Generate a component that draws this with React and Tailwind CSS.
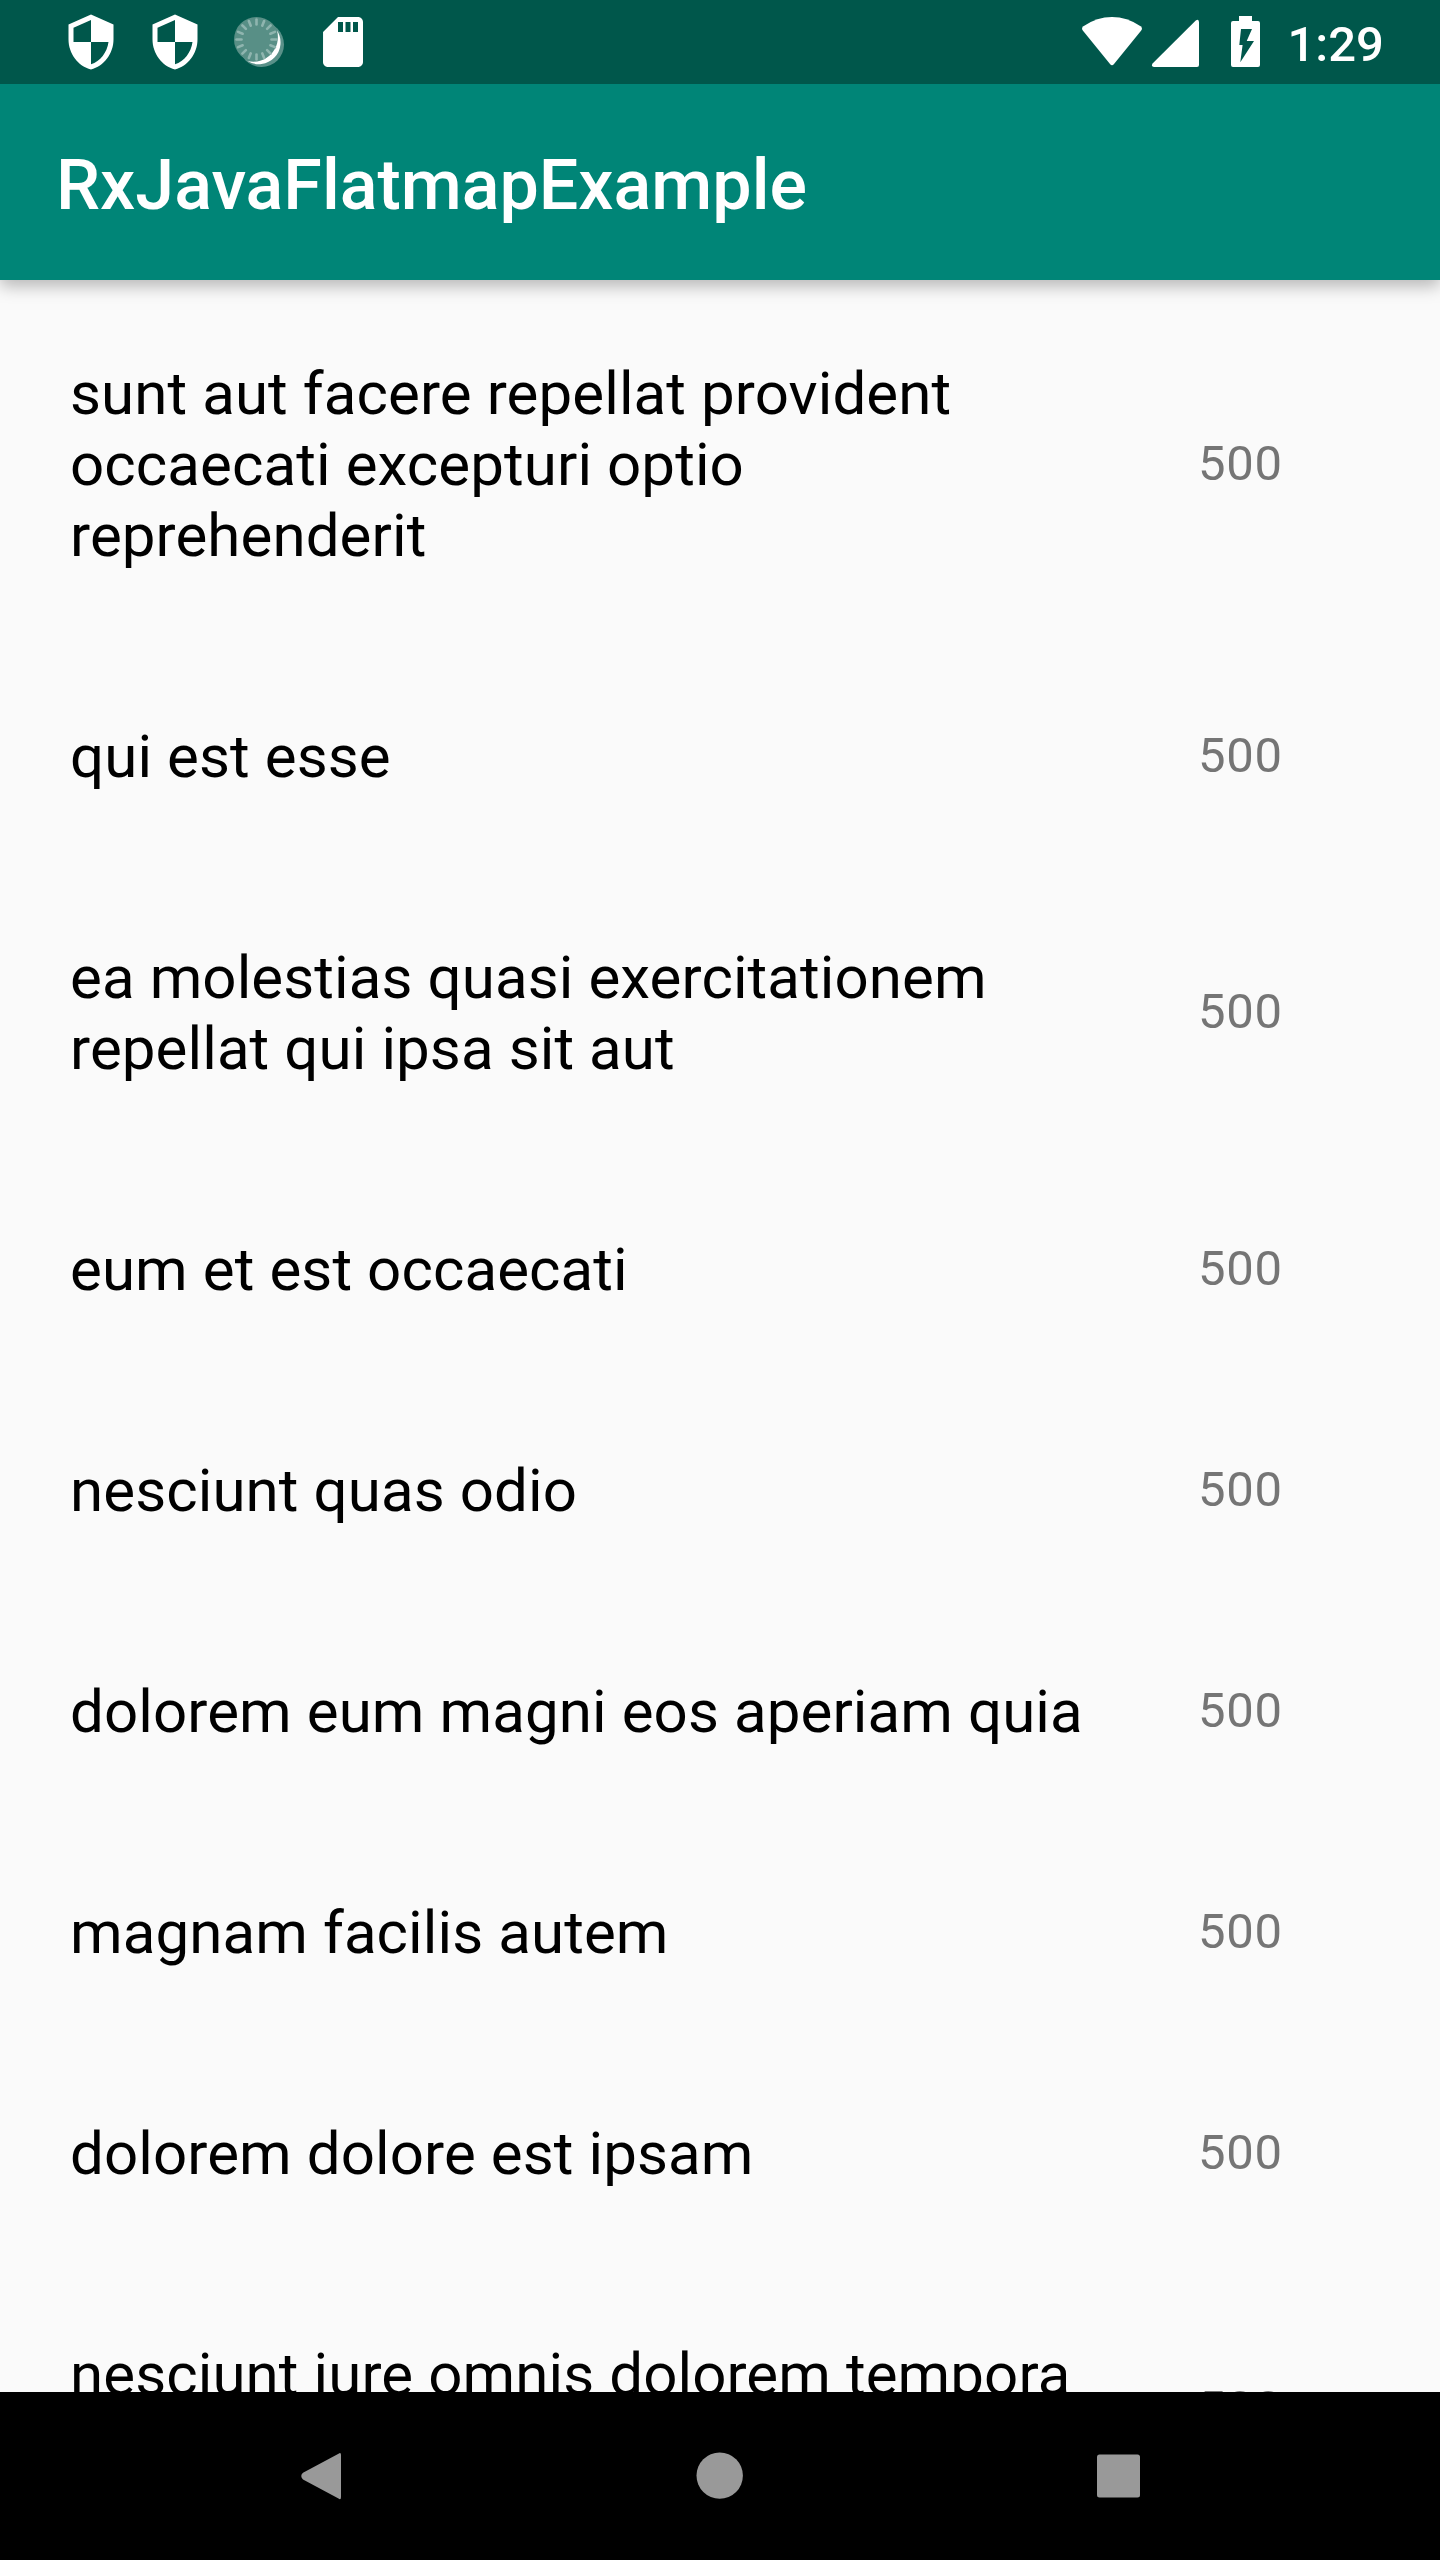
import React from "react";

const posts = [
  ["sunt aut facere repellat provident", "occaecati excepturi optio", "reprehenderit"],
  ["qui est esse"],
  ["ea molestias quasi exercitationem", "repellat qui ipsa sit aut"],
  ["eum et est occaecati"],
  ["nesciunt quas odio"],
  ["dolorem eum magni eos aperiam quia"],
  ["magnam facilis autem"],
  ["dolorem dolore est ipsam"],
  ["nesciunt iure omnis dolorem tempora", "et accusantium"],
];

function ShieldIcon() {
  return (
    <svg className="size-[60px]" viewBox="0 0 24 24" fill="white">
      <path d="M12 1L3 5v6c0 5.55 3.84 10.74 9 12 5.16-1.26 9-6.45 9-12V5l-9-4zm0 10.99h7c-.53 4.12-3.28 7.79-7 8.94V12H5V6.3l7-3.11v8.8z" />
    </svg>
  );
}

function SyncSpinner() {
  return (
    <svg className="size-[60px]" viewBox="229 12 60 60">
      <circle cx="261.5" cy="44.5" r="22.5" fill="white" fillOpacity=".35" />
      <circle cx="256.5" cy="39.5" r="22.5" fill="#588f86" />
      <path d="M277 30.5A21.75 21.75 0 0 1 247.5 61A24.6 24.6 0 0 0 277 30.5Z" fill="white" />
      <g stroke="#8fb5af" strokeWidth="2.6" strokeLinecap="round">
        {Array.from({ length: 16 }, (_, i) => (
          <line key={i} x1="256.5" y1="19.5" x2="256.5" y2="24.5" transform={`rotate(${i * 22.5} 256.5 39.5)`} />
        ))}
      </g>
    </svg>
  );
}

function SdCardIcon() {
  return (
    <svg className="size-[60px]" viewBox="0 0 24 24" fill="white">
      <path d="M18 2h-8L4.02 8 4 20c0 1.1.9 2 2 2h12c1.1 0 2-.9 2-2V4c0-1.1-.9-2-2-2zm-6 6h-2V4h2v4zm3 0h-2V4h2v4zm3 0h-2V4h2v4z" />
    </svg>
  );
}

function SystemIcons() {
  return (
    <svg className="h-[84px] w-[180px]" viewBox="1081 0 180 84" fill="white">
      <path d="M1083.4 26.2Q1097 17 1112 17T1140.6 26.2Q1143 28.1 1141.2 30.6L1114 64Q1112 66.4 1110 64L1082.8 30.6Q1081 28.1 1083.4 26.2Z" />
      <path d="M1195.5 20.8Q1199 18.3 1199 22.5V65Q1199 67 1197 67H1154.5Q1150.3 66.5 1152.8 63.2Z" />
      <path fillRule="evenodd" d="M1239 16H1252V21H1258Q1260 21 1260 23V65Q1260 67 1258 67H1233Q1231 67 1231 65V23Q1231 21 1233 21H1239ZM1241 29L1239.3 45H1242.6L1240.3 62.3L1254 41H1246.7L1252 29Z" />
    </svg>
  );
}

export default function App() {
  return (
    <div className="flex h-[2560px] w-[1440px] flex-col overflow-hidden bg-[#fafafa] font-['Roboto',sans-serif]">
      <div className="z-20 flex h-[84px] shrink-0 items-center justify-between bg-[#00574b] pr-[56px] pl-[61px]">
        <div className="flex gap-6">
          <ShieldIcon />
          <ShieldIcon />
          <SyncSpinner />
          <SdCardIcon />
        </div>
        <div className="flex items-center">
          <SystemIcons />
          <span className="w-[123px] pt-1 pl-[26.5px] text-[49px] leading-[57px] font-medium whitespace-nowrap text-white">1:29</span>
        </div>
      </div>
      <header className="z-10 flex h-[196px] shrink-0 items-center bg-[#008577] pl-14 shadow-[0_6px_16px_rgba(0,0,0,0.28)]">
        <h1 className="pt-[6px] text-[70px] leading-[82px] font-medium text-white">RxJavaFlatmapExample</h1>
      </header>
      <main className="min-h-0 flex-1 overflow-hidden pt-[3px]">
        {posts.map((lines) => (
          <div key={lines[0]} className="flex items-center py-[75px] pl-[70px]">
            <div className="w-[1128px] shrink-0 text-[60px] leading-[71px] tracking-[0.1px] whitespace-nowrap text-black">
              {lines.map((line) => (
                <p key={line}>{line}</p>
              ))}
            </div>
            <span className="mb-[3px] text-[49px] leading-[57px] tracking-[0.7px] text-[#757575]">500</span>
          </div>
        ))}
      </main>
      <nav className="flex h-[168px] shrink-0 items-center justify-center bg-black">
        <svg className="h-[168px] w-[860px]" viewBox="290 2392 860 168" fill="#999">
          <path d="M338.5 2453.7Q341 2451.8 341 2455V2497Q341 2500.5 338.5 2498.5L303 2479.5Q299.5 2476 303 2472.8Z" />
          <circle cx="719.7" cy="2475.6" r="23.2" />
          <rect x="1097" y="2454.5" width="43" height="43" rx="2.5" />
        </svg>
      </nav>
    </div>
  );
}
